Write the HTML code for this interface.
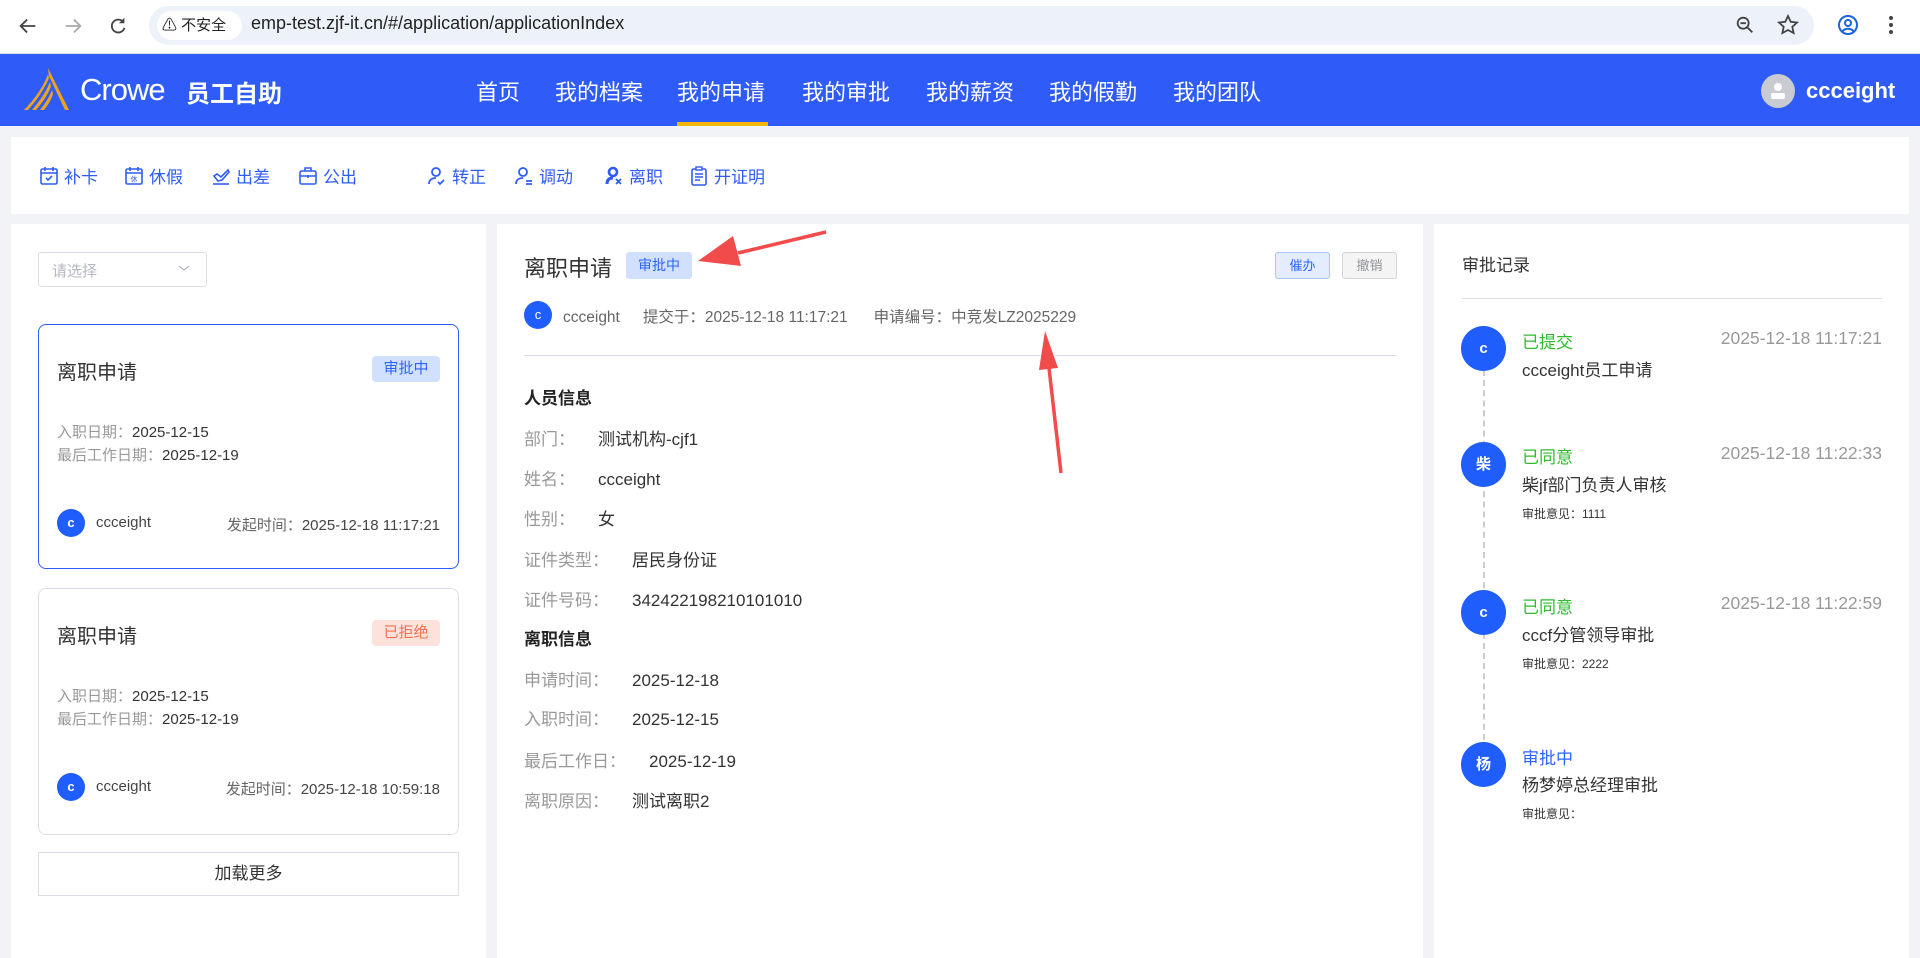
<!DOCTYPE html>
<html><head><meta charset="utf-8">
<style>
*{margin:0;padding:0;box-sizing:border-box}
body{width:1920px;height:958px;overflow:hidden;background:#f2f3f6;font-family:"Liberation Sans","Noto Sans CJK SC",sans-serif;color:#333;position:relative}
.a{position:absolute;white-space:nowrap}
.chrome{position:absolute;left:0;top:0;width:1920px;height:54px;background:#fff;border-bottom:1px solid #dadce0}
.pill{position:absolute;left:149px;top:6px;width:1665px;height:39px;border-radius:20px;background:#edf2fa}
.nav{position:absolute;left:0;top:54px;width:1920px;height:72px;background:#2f5cf8}
.nav .it{position:absolute;top:21px;font-size:22px;color:#fff}
.card{position:absolute;background:#fff}
.tb{position:absolute;top:163px;font-size:17px;color:#2f5cf8;display:flex;align-items:center}
.tb svg{margin-right:5px}
.lab{color:#999}
.av{position:absolute;border-radius:50%;background:#1f5dfc;color:#fff;text-align:center;font-weight:bold}
.row{position:absolute;left:524px;font-size:17px;color:#333}
.row .lab{display:inline-block}
</style></head><body>
<div class="chrome">
 <svg class="a" style="left:17px;top:15px" width="22" height="22" viewBox="0 0 24 24"><path d="M20 12H5M11 5l-7 7 7 7" stroke="#444" stroke-width="2" fill="none"/></svg>
 <svg class="a" style="left:62px;top:15px" width="22" height="22" viewBox="0 0 24 24"><path d="M4 12h15M13 5l7 7-7 7" stroke="#aaa" stroke-width="2" fill="none"/></svg>
 <svg class="a" style="left:107px;top:15px" width="22" height="22" viewBox="0 0 24 24"><path d="M18 8a7 7 0 1 0 1 6" stroke="#444" stroke-width="2" fill="none"/><path d="M19 3v6h-6z" fill="#444"/></svg>
 <div class="pill"></div>
 <div class="a" style="left:157px;top:11px;width:85px;height:29px;border-radius:15px;background:#fff;font-size:15px;line-height:29px;padding-left:5px;color:#222">⚠ 不安全</div>
 <div class="a" style="left:251px;top:13px;font-size:18px;color:#222">emp-test.zjf-it.cn/#/application/applicationIndex</div>
 <svg class="a" style="left:1734px;top:14px" width="22" height="22" viewBox="0 0 24 24"><circle cx="10" cy="10" r="6" stroke="#444" stroke-width="2" fill="none"/><path d="M14.5 14.5L20 20M7 10h6" stroke="#444" stroke-width="2"/></svg>
 <svg class="a" style="left:1776px;top:13px" width="24" height="24" viewBox="0 0 24 24"><path d="M12 3l2.7 5.8 6.3.7-4.7 4.3 1.3 6.2L12 17l-5.6 3 1.3-6.2L3 9.5l6.3-.7z" stroke="#444" stroke-width="1.8" fill="none"/></svg>
 <svg class="a" style="left:1836px;top:13px" width="24" height="24" viewBox="0 0 24 24"><circle cx="12" cy="12" r="9" stroke="#1a66d8" stroke-width="2" fill="none"/><circle cx="12" cy="10" r="3" stroke="#1a66d8" stroke-width="2" fill="none"/><path d="M6.5 18c3-3 8-3 11 0" stroke="#1a66d8" stroke-width="2" fill="none"/></svg>
 <svg class="a" style="left:1886px;top:13px" width="10" height="24" viewBox="0 0 10 24"><circle cx="5" cy="5" r="2" fill="#444"/><circle cx="5" cy="12" r="2" fill="#444"/><circle cx="5" cy="19" r="2" fill="#444"/></svg>
</div>
<div class="nav">
 <svg class="a" style="left:22px;top:14px" width="52" height="44" viewBox="0 0 52 44"><path d="M26 0L47 42 43 42 27 8z" fill="#f2a31c"/><path d="M26 6C22 18 12 32 2 42L6 42C14 33 22 22 27 10z" fill="#f2a31c"/><path d="M28 14C24 24 17 34 10 42L14 42C20 35 26 27 29 18z" fill="#f2a31c"/><path d="M30 22C27 30 22 37 18 42L22 42C26 37 29 32 31 26z" fill="#f2a31c"/></svg>
 <div class="a" style="left:80px;top:18px;font-size:31px;color:#fff;letter-spacing:-1px">Crowe</div>
 <div class="a" style="left:186px;top:20px;font-size:24px;color:#fff;font-weight:bold">员工自助</div>
 <div class="it" style="left:476px">首页</div>
 <div class="it" style="left:555px">我的档案</div>
 <div class="it" style="left:677px">我的申请</div>
 <div class="it" style="left:802px">我的审批</div>
 <div class="it" style="left:926px">我的薪资</div>
 <div class="it" style="left:1049px">我的假勤</div>
 <div class="it" style="left:1173px">我的团队</div>
 <div class="a" style="left:677px;top:68px;width:91px;height:4px;background:#f5b50a"></div>
 <div class="a" style="left:1761px;top:20px;width:34px;height:34px;border-radius:50%;background:#c8cbd2"></div>
 <svg class="a" style="left:1768px;top:27px" width="20" height="20" viewBox="0 0 20 20"><circle cx="10" cy="6" r="4" fill="#fff"/><rect x="3" y="12" width="14" height="6" rx="2" fill="#fff"/></svg>
 <div class="a" style="left:1806px;top:24px;font-size:22px;font-weight:bold;color:#fff">ccceight</div>
</div>
<div class="card" style="left:11px;top:137px;width:1898px;height:77px"></div>
<div class="tb" style="left:39px"><svg width="20" height="20" viewBox="0 0 20 20"><rect x="2" y="3" width="16" height="15" rx="1.5" stroke="#2f5cf8" stroke-width="1.6" fill="none"/><path d="M2 7h16M6 1v4M14 1v4M7 12l2 2 4-4" stroke="#2f5cf8" stroke-width="1.6" fill="none"/></svg>补卡</div>
<div class="tb" style="left:124px"><svg width="20" height="20" viewBox="0 0 20 20"><rect x="2" y="3" width="16" height="15" rx="1.5" stroke="#2f5cf8" stroke-width="1.6" fill="none"/><path d="M2 7h16M6 1v4M14 1v4" stroke="#2f5cf8" stroke-width="1.6"/><text x="10" y="15.5" font-size="7" text-anchor="middle" fill="#2f5cf8">休</text></svg>休假</div>
<div class="tb" style="left:211px"><svg width="20" height="20" viewBox="0 0 20 20"><path d="M3 10l3-2 4 3 7-7 1 2-7 8-4 1z" stroke="#2f5cf8" stroke-width="1.6" fill="none"/><path d="M2 18h16" stroke="#2f5cf8" stroke-width="1.6"/></svg>出差</div>
<div class="tb" style="left:298px"><svg width="20" height="20" viewBox="0 0 20 20"><rect x="2" y="5" width="16" height="13" rx="1.5" stroke="#2f5cf8" stroke-width="1.6" fill="none"/><path d="M7 5V2h6v3M2 10h16M10 9v3" stroke="#2f5cf8" stroke-width="1.6" fill="none"/></svg>公出</div>
<div class="tb" style="left:427px"><svg width="20" height="20" viewBox="0 0 20 20"><circle cx="9" cy="6" r="4" stroke="#2f5cf8" stroke-width="1.8" fill="none"/><path d="M2 18c0-4 3-6 7-6M11 16l2 2 4-4" stroke="#2f5cf8" stroke-width="1.8" fill="none"/></svg>转正</div>
<div class="tb" style="left:514px"><svg width="20" height="20" viewBox="0 0 20 20"><circle cx="9" cy="6" r="4" stroke="#2f5cf8" stroke-width="1.8" fill="none"/><path d="M2 18c0-4 3-6 7-6M12 15h6M12 18h6" stroke="#2f5cf8" stroke-width="1.8" fill="none"/></svg>调动</div>
<div class="tb" style="left:604px"><svg width="20" height="20" viewBox="0 0 20 20"><circle cx="9" cy="6" r="4" stroke="#2f5cf8" stroke-width="2.6" fill="none"/><path d="M3 18c0-4 2-6 6-6" stroke="#2f5cf8" stroke-width="3" fill="none"/><path d="M12 13l5 5M17 13l-5 5" stroke="#2f5cf8" stroke-width="1.8"/></svg>离职</div>
<div class="tb" style="left:689px"><svg width="20" height="20" viewBox="0 0 20 20"><rect x="3" y="3" width="14" height="16" rx="1.5" stroke="#2f5cf8" stroke-width="1.6" fill="none"/><rect x="7" y="1" width="6" height="3" stroke="#2f5cf8" stroke-width="1.4" fill="#fff"/><path d="M6 8h8M6 11h8M6 14h5" stroke="#2f5cf8" stroke-width="1.4"/></svg>开证明</div>

<!-- left panel -->
<div class="card" style="left:11px;top:224px;width:475px;height:734px"></div>
<div class="a" style="left:38px;top:252px;width:169px;height:35px;border:1px solid #dcdfe6;border-radius:3px"></div>
<div class="a" style="left:52px;top:260px;font-size:15px;color:#b5b8bf">请选择</div>
<svg class="a" style="left:177px;top:263px" width="14" height="10" viewBox="0 0 14 10"><path d="M2 3l5 4 5-4" stroke="#b5b8bf" stroke-width="1.2" fill="none"/></svg>

<div class="a" style="left:38px;top:324px;width:421px;height:245px;border:1.5px solid #2f5cf8;border-radius:8px"></div>
<div class="a" style="left:57px;top:356px;font-size:20px;color:#333">离职申请</div>
<div class="a" style="left:372px;top:356px;width:68px;height:26px;background:#d2e0ff;color:#2c64ff;border-radius:4px;font-size:15px;line-height:26px;text-align:center">审批中</div>
<div class="a" style="left:57px;top:421px;font-size:15px"><span class="lab">入职日期：</span>2025-12-15</div>
<div class="a" style="left:57px;top:444px;font-size:15px"><span class="lab">最后工作日期：</span>2025-12-19</div>
<div class="av" style="left:57px;top:509px;width:28px;height:28px;line-height:28px;font-size:13px">c</div>
<div class="a" style="left:96px;top:514px;font-size:15px;color:#444">ccceight</div>
<div class="a" style="left:216px;top:514px;font-size:15px;color:#444;width:224px;text-align:right"><span style="color:#666">发起时间：</span>2025-12-18 11:17:21</div>

<div class="a" style="left:38px;top:588px;width:421px;height:247px;border:1px solid #dcdfe6;border-radius:8px"></div>
<div class="a" style="left:57px;top:620px;font-size:20px;color:#333">离职申请</div>
<div class="a" style="left:372px;top:620px;width:68px;height:26px;background:#fde2dc;color:#f5704c;border-radius:4px;font-size:15px;line-height:26px;text-align:center">已拒绝</div>
<div class="a" style="left:57px;top:685px;font-size:15px"><span class="lab">入职日期：</span>2025-12-15</div>
<div class="a" style="left:57px;top:708px;font-size:15px"><span class="lab">最后工作日期：</span>2025-12-19</div>
<div class="av" style="left:57px;top:773px;width:28px;height:28px;line-height:28px;font-size:13px">c</div>
<div class="a" style="left:96px;top:778px;font-size:15px;color:#444">ccceight</div>
<div class="a" style="left:216px;top:778px;font-size:15px;color:#444;width:224px;text-align:right"><span style="color:#666">发起时间：</span>2025-12-18 10:59:18</div>

<div class="a" style="left:38px;top:852px;width:421px;height:44px;border:1px solid #dcdfe6;font-size:17px;line-height:42px;text-align:center;color:#333">加载更多</div>

<!-- middle -->
<div class="card" style="left:497px;top:224px;width:926px;height:734px"></div>
<div class="a" style="left:524px;top:251px;font-size:22px;color:#333">离职申请</div>
<div class="a" style="left:626px;top:252px;width:66px;height:27px;background:#d2e0ff;color:#2c64ff;border-radius:3px;font-size:14px;line-height:27px;text-align:center">审批中</div>
<div class="a" style="left:1275px;top:252px;width:55px;height:27px;background:#e3edff;border:1px solid #a9c4ff;color:#2c64ff;border-radius:3px;font-size:13px;line-height:25px;text-align:center">催办</div>
<div class="a" style="left:1342px;top:252px;width:55px;height:27px;background:#f4f4f5;border:1px solid #d3d4d6;color:#909399;border-radius:3px;font-size:13px;line-height:25px;text-align:center">撤销</div>
<div class="av" style="left:524px;top:301px;width:28px;height:28px;line-height:28px;font-size:13px;font-weight:normal">c</div>
<div class="a" style="left:563px;top:305px;font-size:15.5px;color:#666">ccceight<span style="margin-left:23px">提交于：2025-12-18 11:17:21</span><span style="margin-left:26px">申请编号：中竞发LZ2025229</span></div>
<div class="a" style="left:524px;top:355px;width:873px;height:1px;background:#dcdfe6"></div>
<div class="a" style="left:524px;top:384px;font-size:17px;font-weight:bold;color:#222">人员信息</div>
<div class="row" style="top:425px"><span class="lab">部门：</span><span style="margin-left:23px">测试机构-cjf1</span></div>
<div class="row" style="top:465px"><span class="lab">姓名：</span><span style="margin-left:23px">ccceight</span></div>
<div class="row" style="top:505px"><span class="lab">性别：</span><span style="margin-left:23px">女</span></div>
<div class="row" style="top:546px"><span class="lab">证件类型：</span><span style="margin-left:23px">居民身份证</span></div>
<div class="row" style="top:586px"><span class="lab">证件号码：</span><span style="margin-left:23px">342422198210101010</span></div>
<div class="a" style="left:524px;top:625px;font-size:17px;font-weight:bold;color:#222">离职信息</div>
<div class="row" style="top:666px"><span class="lab">申请时间：</span><span style="margin-left:23px">2025-12-18</span></div>
<div class="row" style="top:705px"><span class="lab">入职时间：</span><span style="margin-left:23px">2025-12-15</span></div>
<div class="row" style="top:747px"><span class="lab">最后工作日：</span><span style="margin-left:23px">2025-12-19</span></div>
<div class="row" style="top:787px"><span class="lab">离职原因：</span><span style="margin-left:23px">测试离职2</span></div>

<!-- right -->
<div class="card" style="left:1434px;top:224px;width:475px;height:734px"></div>
<div class="a" style="left:1462px;top:251px;font-size:17px;color:#333">审批记录</div>
<div class="a" style="left:1462px;top:298px;width:420px;height:1px;background:#dcdfe6"></div>
<div class="a" style="left:1483px;top:370px;width:0;height:380px;border-left:2px dashed #ccc"></div>
<div class="av" style="left:1461px;top:326px;width:45px;height:45px;line-height:45px;font-size:15px">c</div>
<div class="av" style="left:1461px;top:442px;width:45px;height:45px;line-height:45px;font-size:15px">柴</div>
<div class="av" style="left:1461px;top:590px;width:45px;height:45px;line-height:45px;font-size:15px">c</div>
<div class="av" style="left:1461px;top:742px;width:45px;height:45px;line-height:45px;font-size:15px">杨</div>

<div class="a" style="left:1522px;top:328px;font-size:17px;color:#2dbc2d">已提交</div>
<div class="a" style="left:1680px;top:328px;width:202px;text-align:right;font-size:17.5px;color:#999">2025-12-18 11:17:21</div>
<div class="a" style="left:1522px;top:356px;font-size:17px;color:#333">ccceight员工申请</div>

<div class="a" style="left:1522px;top:443px;font-size:17px;color:#2dbc2d">已同意</div>
<div class="a" style="left:1680px;top:443px;width:202px;text-align:right;font-size:17.5px;color:#999">2025-12-18 11:22:33</div>
<div class="a" style="left:1522px;top:471px;font-size:17px;color:#333">柴jf部门负责人审核</div>
<div class="a" style="left:1522px;top:505px;font-size:12px;color:#333">审批意见：1111</div>

<div class="a" style="left:1522px;top:593px;font-size:17px;color:#2dbc2d">已同意</div>
<div class="a" style="left:1680px;top:593px;width:202px;text-align:right;font-size:17.5px;color:#999">2025-12-18 11:22:59</div>
<div class="a" style="left:1522px;top:621px;font-size:17px;color:#333">cccf分管领导审批</div>
<div class="a" style="left:1522px;top:655px;font-size:12px;color:#333">审批意见：2222</div>

<div class="a" style="left:1522px;top:744px;font-size:17px;color:#2c64ff">审批中</div>
<div class="a" style="left:1522px;top:771px;font-size:17px;color:#333">杨梦婷总经理审批</div>
<div class="a" style="left:1522px;top:805px;font-size:12px;color:#333">审批意见：</div>

<!-- arrows -->
<svg class="a" style="left:0;top:0" width="1920" height="958" viewBox="0 0 1920 958">
 <path d="M826 232L738 253" stroke="#f24b4b" stroke-width="3.5"/>
 <path d="M698 261L733 236 741 266z" fill="#f24b4b"/>
 <path d="M1061 473L1049 368" stroke="#f24b4b" stroke-width="3.5"/>
 <path d="M1045 331L1058 368 1039 370z" fill="#f24b4b"/>
</svg>
</body></html>
